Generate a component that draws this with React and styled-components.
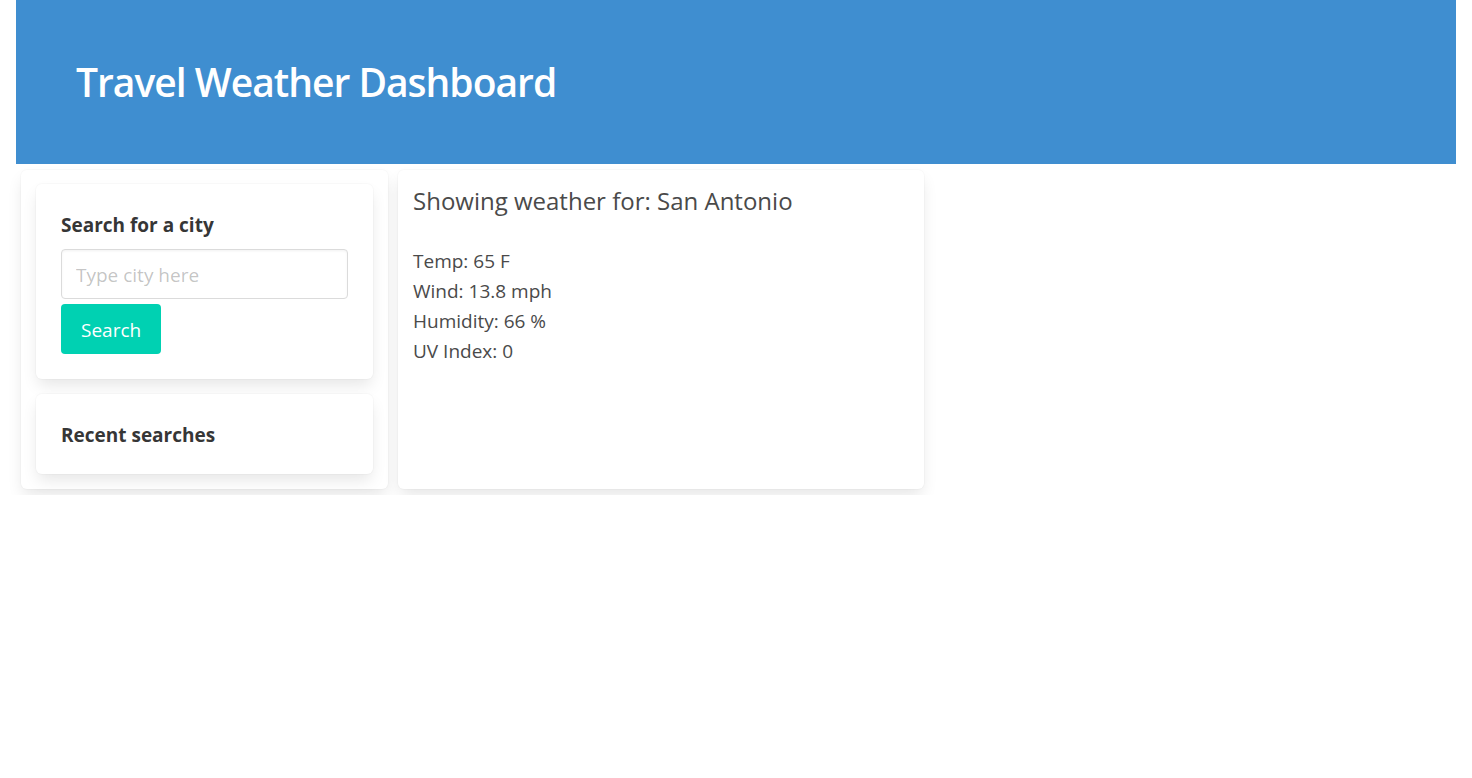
import React from "react";
import styled, { createGlobalStyle } from "styled-components";

const Global = createGlobalStyle`
  html, body { margin: 0; padding: 0; background: #fff; }
  body {
    font-family: "Open Sans", "Noto Sans", sans-serif;
    color: #4a4a4a;
  }
  * { box-sizing: border-box; }
`;

const Page = styled.div`
  padding: 0 16px;
`;

const Hero = styled.header`
  background: #3f8ed0;
  height: 164px;
  display: flex;
  align-items: center;
  padding: 0 60px;
`;

const Title = styled.h1`
  margin: 0;
  color: #fff;
  font-size: 39px;
  font-weight: 600;
  letter-spacing: -1px;
  line-height: 1.125;
`;

const Main = styled.main`
  display: flex;
  align-items: stretch;
  gap: 10px;
  padding: 6px 5px;
`;

const Box = styled.div`
  background: #fff;
  border-radius: 6px;
  box-shadow: 0 0.5em 1em -0.125em rgba(10, 10, 10, 0.1),
    0 0 0 1px rgba(10, 10, 10, 0.02);
`;

const Sidebar = styled(Box)`
  width: 367px;
  padding: 14px 15px 15px;
  display: flex;
  flex-direction: column;
  gap: 15px;
`;

const Card = styled(Box)`
  padding: 25px;
`;

const Label = styled.div`
  font-size: 19px;
  font-weight: 700;
  line-height: 30px;
  padding-top: 1px;
  margin-bottom: -1px;
  color: #363636;
`;

const Input = styled.input`
  display: block;
  width: 100%;
  height: 50px;
  margin-top: 10px;
  padding: 2px 14px 0;
  font-family: inherit;
  font-size: 19px;
  color: #363636;
  border: 1px solid #dbdbdb;
  border-radius: 4px;
  box-shadow: inset 0 0.0625em 0.125em rgba(10, 10, 10, 0.05);
  outline: none;
  &::placeholder { color: rgba(54, 54, 54, 0.3); }
`;

const Button = styled.button`
  display: block;
  margin-top: 5px;
  height: 50px;
  padding: 1px 20px 0;
  background: #00d1b2;
  color: #fff;
  border: none;
  border-radius: 4px;
  font-family: inherit;
  font-size: 19px;
  cursor: pointer;
`;

const Weather = styled(Box)`
  width: 526px;
  padding: 15px;
`;

const Heading = styled.h2`
  margin: 0 0 29px;
  font-size: 24px;
  font-weight: 400;
  line-height: 32px;
  color: #4a4a4a;
`;

const Stat = styled.p`
  margin: 0;
  font-size: 19px;
  line-height: 30px;
  color: #4a4a4a;
`;

export default function App() {
  const stats = ["Temp: 65 F", "Wind: 13.8 mph", "Humidity: 66 %", "UV Index: 0"];
  return (
    <Page>
      <Global />
      <Hero>
        <Title>Travel Weather Dashboard</Title>
      </Hero>
      <Main>
        <Sidebar>
          <Card>
            <Label>Search for a city</Label>
            <Input placeholder="Type city here" />
            <Button>Search</Button>
          </Card>
          <Card>
            <Label>Recent searches</Label>
          </Card>
        </Sidebar>
        <Weather>
          <Heading>Showing weather for: San Antonio</Heading>
          {stats.map((s) => (
            <Stat key={s}>{s}</Stat>
          ))}
        </Weather>
      </Main>
    </Page>
  );
}
